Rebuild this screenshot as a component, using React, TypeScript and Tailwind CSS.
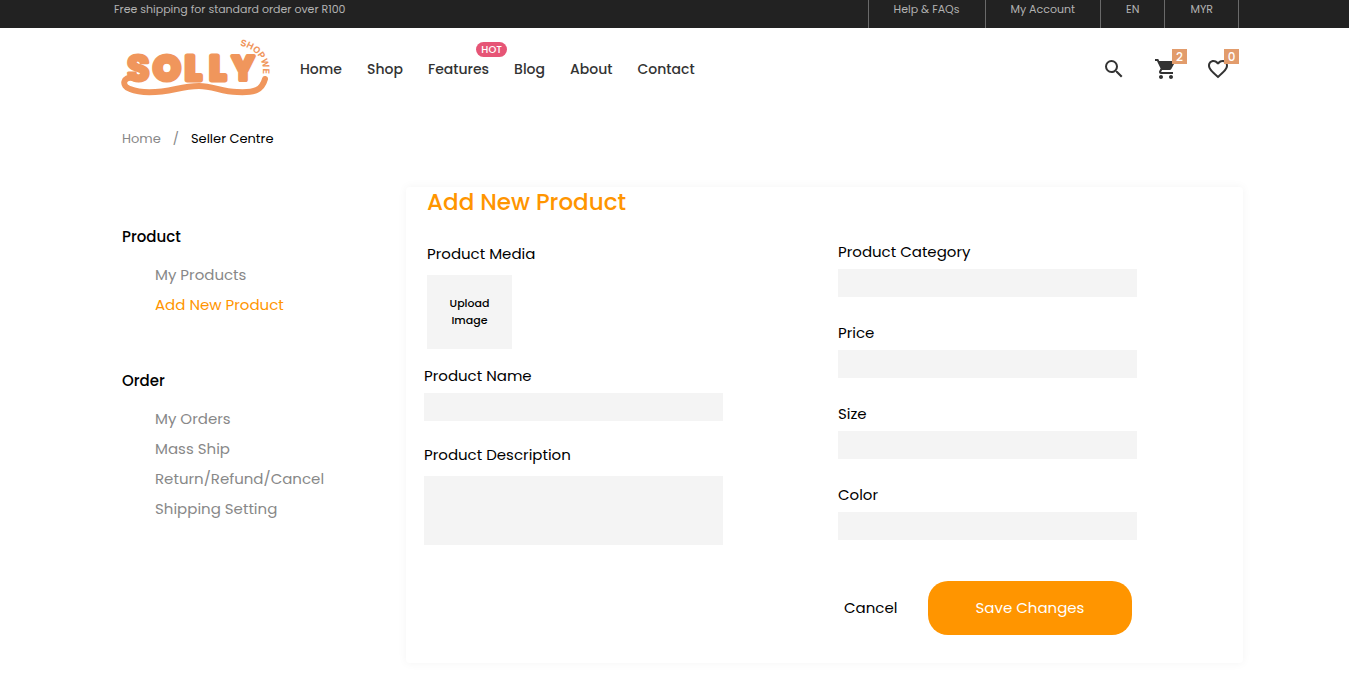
import { MdFavoriteBorder, MdSearch, MdShoppingCart } from "react-icons/md";

const topLinks = ["Help & FAQs", "My Account", "EN", "MYR"];
const navLinks = ["Home", "Shop", "Features", "Blog", "About", "Contact"];
const menus = [
  { title: "Product", items: ["My Products", "Add New Product"] },
  { title: "Order", items: ["My Orders", "Mass Ship", "Return/Refund/Cancel", "Shipping Setting"] },
];

function Logo() {
  return (
    <svg width="152" height="62" viewBox="0 0 152 62" role="img" aria-label="Solly Shopwe" className="shrink-0 overflow-visible">
      <defs>
        <path id="arc" d="M120 8 A25 25 0 0 1 142 40" />
      </defs>
      <g fill="#f0965c">
        <g
          fontFamily="Poppins, Inter, sans-serif"
          fontWeight="700"
          stroke="#f0965c"
          strokeLinejoin="round"
        >
          <text x="7" y="43" fontSize="37" strokeWidth="3">
            S
          </text>
          <text x="33.5 65 89.5" y="42" fontSize="34" strokeWidth="5">
            OLL
          </text>
          <text x="112" y="42" fontSize="33" strokeWidth="4">
            Y
          </text>
        </g>
        <text fontFamily="Inter, sans-serif" fontSize="9" fontWeight="700">
          <textPath href="#arc">SHOPWE</textPath>
        </text>
      </g>
      <path
        d="M13 40 C3 38 1 48 10 51 C22 56 42 54 56 51 C65 49 71 48 79 48 C93 48 102 54 117 54 C135 55 142 52 145 41"
        fill="none"
        stroke="#f0965c"
        strokeWidth="6"
        strokeLinecap="round"
      />
    </svg>
  );
}

function Badge({ count }: { count: number }) {
  return (
    <span className="absolute -top-2 left-[18px] flex h-[15px] w-[15px] items-center justify-center bg-[#e29c6c] text-xs font-medium text-white">
      {count}
    </span>
  );
}

function Field({ id, label }: { id: string; label: string }) {
  return (
    <div>
      <label htmlFor={id} className="block leading-6">
        {label}
      </label>
      <input id={id} type="text" className="mt-[5px] block h-7 w-full max-w-[299px] bg-[#f4f4f4] px-2 outline-none" />
    </div>
  );
}

export default function App() {
  return (
    <div className="bg-white font-[Poppins,Inter,sans-serif] text-[15px] text-black">
      <div className="flex h-7 justify-between bg-[#222] pr-[110px] pl-[114px] text-[11px] leading-[18px] text-[#b2b2b2]">
        <p>Free shipping for standard order over R100</p>
        <div className="flex border-r border-[#6a6a6a]">
          {topLinks.map((t) => (
            <a key={t} href="#" className="border-l border-[#6a6a6a] px-[25px]">
              {t}
            </a>
          ))}
        </div>
      </div>

      <header className="flex h-[82px] items-center pr-[110px] pl-[120px]">
        <a href="#">
          <Logo />
        </a>
        <nav className="ml-7 flex gap-[25px] text-[14px] font-medium text-[#333]">
          {navLinks.map((t) => (
            <a key={t} href="#" className="relative">
              {t}
              {t === "Features" && (
                <span className="absolute -top-[17px] -right-[18px] flex h-[15px] w-[31px] items-center justify-center rounded-full bg-[#e65576] text-[10px] font-medium text-white">
                  HOT
                </span>
              )}
            </a>
          ))}
        </nav>
        <div className="ml-auto flex gap-7 pr-[9px] text-[24px] text-[#333]">
          <button aria-label="Search">
            <MdSearch />
          </button>
          <button aria-label="Cart" className="relative">
            <MdShoppingCart />
            <Badge count={2} />
          </button>
          <button aria-label="Wishlist" className="relative">
            <MdFavoriteBorder />
            <Badge count={0} />
          </button>
        </div>
      </header>

      <nav aria-label="Breadcrumb" className="mt-[19px] flex gap-3 pl-[122px] text-[13px] leading-5">
        <a href="#" className="text-[#888]">
          Home
        </a>
        <span className="text-[#888]">/</span>
        <span>Seller Centre</span>
      </nav>

      <main className="mt-[38px] flex pr-[106px] pb-3 pl-[122px]">
        <aside className="w-[284px] shrink-0 pt-[38px]">
          {menus.map((m) => (
            <section key={m.title} className="mb-[49px]">
              <h2 className="leading-6 font-medium">{m.title}</h2>
              <ul className="mt-[11px] pl-[33px] leading-[30px] text-[#888]">
                {m.items.map((t) => (
                  <li key={t}>
                    <a href="#" className={t === "Add New Product" ? "text-[#ff9500]" : ""}>
                      {t}
                    </a>
                  </li>
                ))}
              </ul>
            </section>
          ))}
        </aside>

        <form className="flex-1 rounded-sm pr-px pb-7 pl-[18px] shadow-[0_0_10px_rgba(0,0,0,0.05)]">
          <h1 className="pl-[3px] text-[23px] leading-[30px] font-medium text-[#ff9500]">Add New Product</h1>
          <div className="grid grid-cols-2 gap-x-[10px]">
            <div className="flex flex-col pt-[25px]">
              <div className="pl-[3px]">
                <p className="leading-6">Product Media</p>
                <button
                  type="button"
                  className="mt-[9px] block h-[74px] w-[85px] bg-[#f4f4f4] px-4 text-[11px] leading-[17px] font-medium"
                >
                  Upload Image
                </button>
              </div>
              <div className="mt-[15px]">
                <Field id="name" label="Product Name" />
              </div>
              <div className="mt-[22px]">
                <label htmlFor="description" className="block leading-6">
                  Product Description
                </label>
                <textarea
                  id="description"
                  className="mt-[9px] block h-[69px] w-full max-w-[299px] resize-none bg-[#f4f4f4] p-2 outline-none"
                />
              </div>
            </div>
            <div className="pt-[23px]">
              <div className="flex flex-col gap-6">
                <Field id="category" label="Product Category" />
                <Field id="price" label="Price" />
                <Field id="size" label="Size" />
                <Field id="color" label="Color" />
              </div>
              <div className="mt-[41px] flex max-w-[294px] items-center justify-between pl-[6px]">
                <button type="button">Cancel</button>
                <button type="submit" className="h-[54px] w-[204px] rounded-[20px] bg-[#ff9500] text-white">
                  Save Changes
                </button>
              </div>
            </div>
          </div>
        </form>
      </main>
    </div>
  );
}
